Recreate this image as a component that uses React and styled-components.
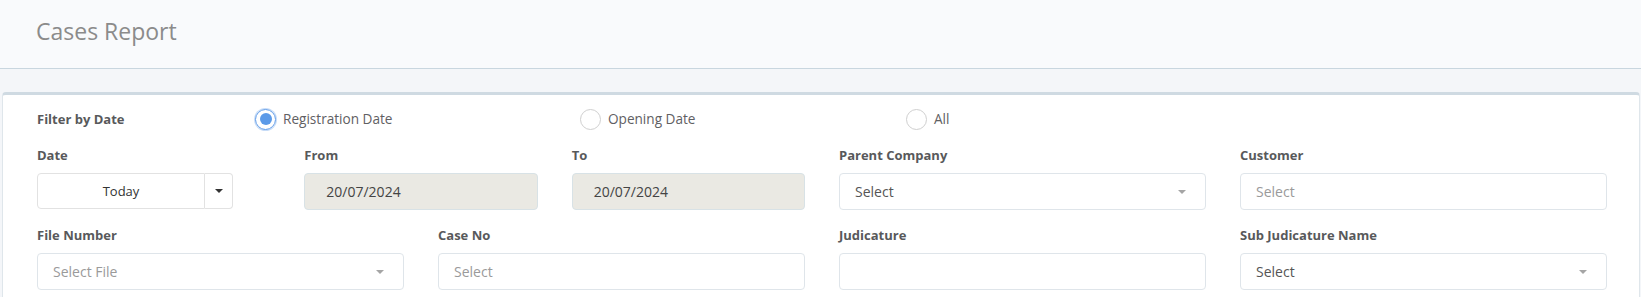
import React from 'react';
import styled, {createGlobalStyle} from 'styled-components';

const GlobalStyle = createGlobalStyle`
  * { box-sizing: border-box; }
  body {
    margin: 0;
    font-family: "Open Sans", "Noto Sans", "Liberation Sans", sans-serif;
    background: #f4f6f9;
  }
`;

const Page = styled.div`
  min-height: 100vh;
  background: #f4f6f9;
`;

const Header = styled.div`
  height: 69px;
  padding: 15px 0 0 36px;
  background: #f9fafc;
  border-bottom: 1px solid #c9d6df;
`;

const Title = styled.h1`
  margin: 0;
  font-size: 23px;
  line-height: 32px;
  font-weight: 400;
  color: #8b8b8b;
`;

const Content = styled.div`
  padding-top: 23px;
`;

const Card = styled.div`
  margin: 0 1px 0 2px;
  padding: 13px 32px 20px 34px;
  background: #fff;
  border: 1px solid #dfe6eb;
  border-top: 3px solid #cfdae2;
  border-radius: 4px;
`;

const FilterRow = styled.div`
  display: grid;
  grid-template-columns: 218px 325px 326px 1fr;
  align-items: center;
  height: 22px;
`;

const Label = styled.div`
  font-size: 13px;
  line-height: 20px;
  font-weight: 700;
  color: #58595b;
  margin-bottom: ${p => (p.$inline ? '0' : '8px')};
`;

const RadioOption = styled.label`
  display: flex;
  align-items: center;
  gap: 7px;
  font-size: 13.6px;
  line-height: 20px;
  color: #5f6063;
`;

const RadioCircle = styled.span`
  width: 21px;
  height: 21px;
  border-radius: 50%;
  border: 1px solid ${p => (p.$checked ? '#5f9be8' : '#cfcfcf')};
  display: flex;
  align-items: center;
  justify-content: center;
  box-shadow: ${p => (p.$checked ? '0 0 0 1px rgba(95,155,232,0.35)' : 'none')};
  &::after {
    content: '';
    width: 12px;
    height: 12px;
    border-radius: 50%;
    background: ${p => (p.$checked ? '#5b9ae8' : 'transparent')};
  }
`;

const FieldGrid = styled.div`
  display: grid;
  grid-template-columns: repeat(4, 1fr);
  column-gap: 34px;
  margin-top: 15px;
`;

const DateGroup = styled.div`
  grid-column: span 2;
  display: grid;
  grid-template-columns: repeat(3, 1fr);
  column-gap: 34px;
`;

const Field = styled.div`
  margin-bottom: 15px;
`;

const Input = styled.div`
  height: 37px;
  display: flex;
  align-items: center;
  justify-content: space-between;
  padding: 0 ${p => (p.$readonly ? '21px' : '15px')};
  border: 1px solid ${p => (p.$readonly ? '#d8e2e6' : '#dfe5ea')};
  border-radius: 4px;
  background: ${p => (p.$readonly ? '#eae9e3' : '#fff')};
  font-size: 14px;
  color: ${p => (p.$muted ? '#9a9a9a' : p.$readonly ? '#444' : '#555')};
`;

const Caret = styled.span`
  width: 0;
  height: 0;
  margin-right: ${p => (p.$center ? '0' : '4px')};
  border-left: 4px solid transparent;
  border-right: 4px solid transparent;
  border-top: 4px solid ${p => (p.$dark ? '#333' : '#a5a5a5')};
`;

const InputGroup = styled.div`
  display: flex;
  width: 196px;
  height: 36px;
`;

const GroupText = styled.div`
  flex: 0 0 168px;
  display: flex;
  align-items: center;
  justify-content: center;
  border: 1px solid #e2e2e2;
  border-radius: 4px 0 0 4px;
  font-size: 13px;
  color: #333;
`;

const GroupButton = styled.div`
  flex: 0 0 28px;
  display: flex;
  align-items: center;
  justify-content: center;
  border: 1px solid #e2e2e2;
  border-left: none;
  border-radius: 0 4px 4px 0;
`;

const radios = [
    {label: 'Registration Date', checked: true},
    {label: 'Opening Date', checked: false},
    {label: 'All', checked: false},
];

const SelectBox = ({text, muted}) => (
    <Input $muted={muted}>
        <span>{text}</span>
        <Caret />
    </Input>
);

export default function App() {
    return (
        <Page>
            <GlobalStyle />
            <Header>
                <Title>Cases Report</Title>
            </Header>
            <Content>
                <Card>
                    <FilterRow>
                        <Label $inline>Filter by Date</Label>
                        {radios.map(({label, checked}) => (
                            <RadioOption key={label}>
                                <RadioCircle $checked={checked} />
                                {label}
                            </RadioOption>
                        ))}
                    </FilterRow>

                    <FieldGrid>
                        <DateGroup>
                            <Field>
                                <Label>Date</Label>
                                <InputGroup>
                                    <GroupText>Today</GroupText>
                                    <GroupButton><Caret $dark $center /></GroupButton>
                                </InputGroup>
                            </Field>
                            <Field>
                                <Label>From</Label>
                                <Input $readonly>20/07/2024</Input>
                            </Field>
                            <Field>
                                <Label>To</Label>
                                <Input $readonly>20/07/2024</Input>
                            </Field>
                        </DateGroup>
                        <Field>
                            <Label>Parent Company</Label>
                            <SelectBox text="Select" />
                        </Field>
                        <Field>
                            <Label>Customer</Label>
                            <Input $muted>Select</Input>
                        </Field>

                        <Field>
                            <Label>File Number</Label>
                            <SelectBox text="Select File" muted />
                        </Field>
                        <Field>
                            <Label>Case No</Label>
                            <Input $muted>Select</Input>
                        </Field>
                        <Field>
                            <Label>Judicature</Label>
                            <Input />
                        </Field>
                        <Field>
                            <Label>Sub Judicature Name</Label>
                            <SelectBox text="Select" />
                        </Field>
                    </FieldGrid>
                </Card>
            </Content>
        </Page>
    );
}
